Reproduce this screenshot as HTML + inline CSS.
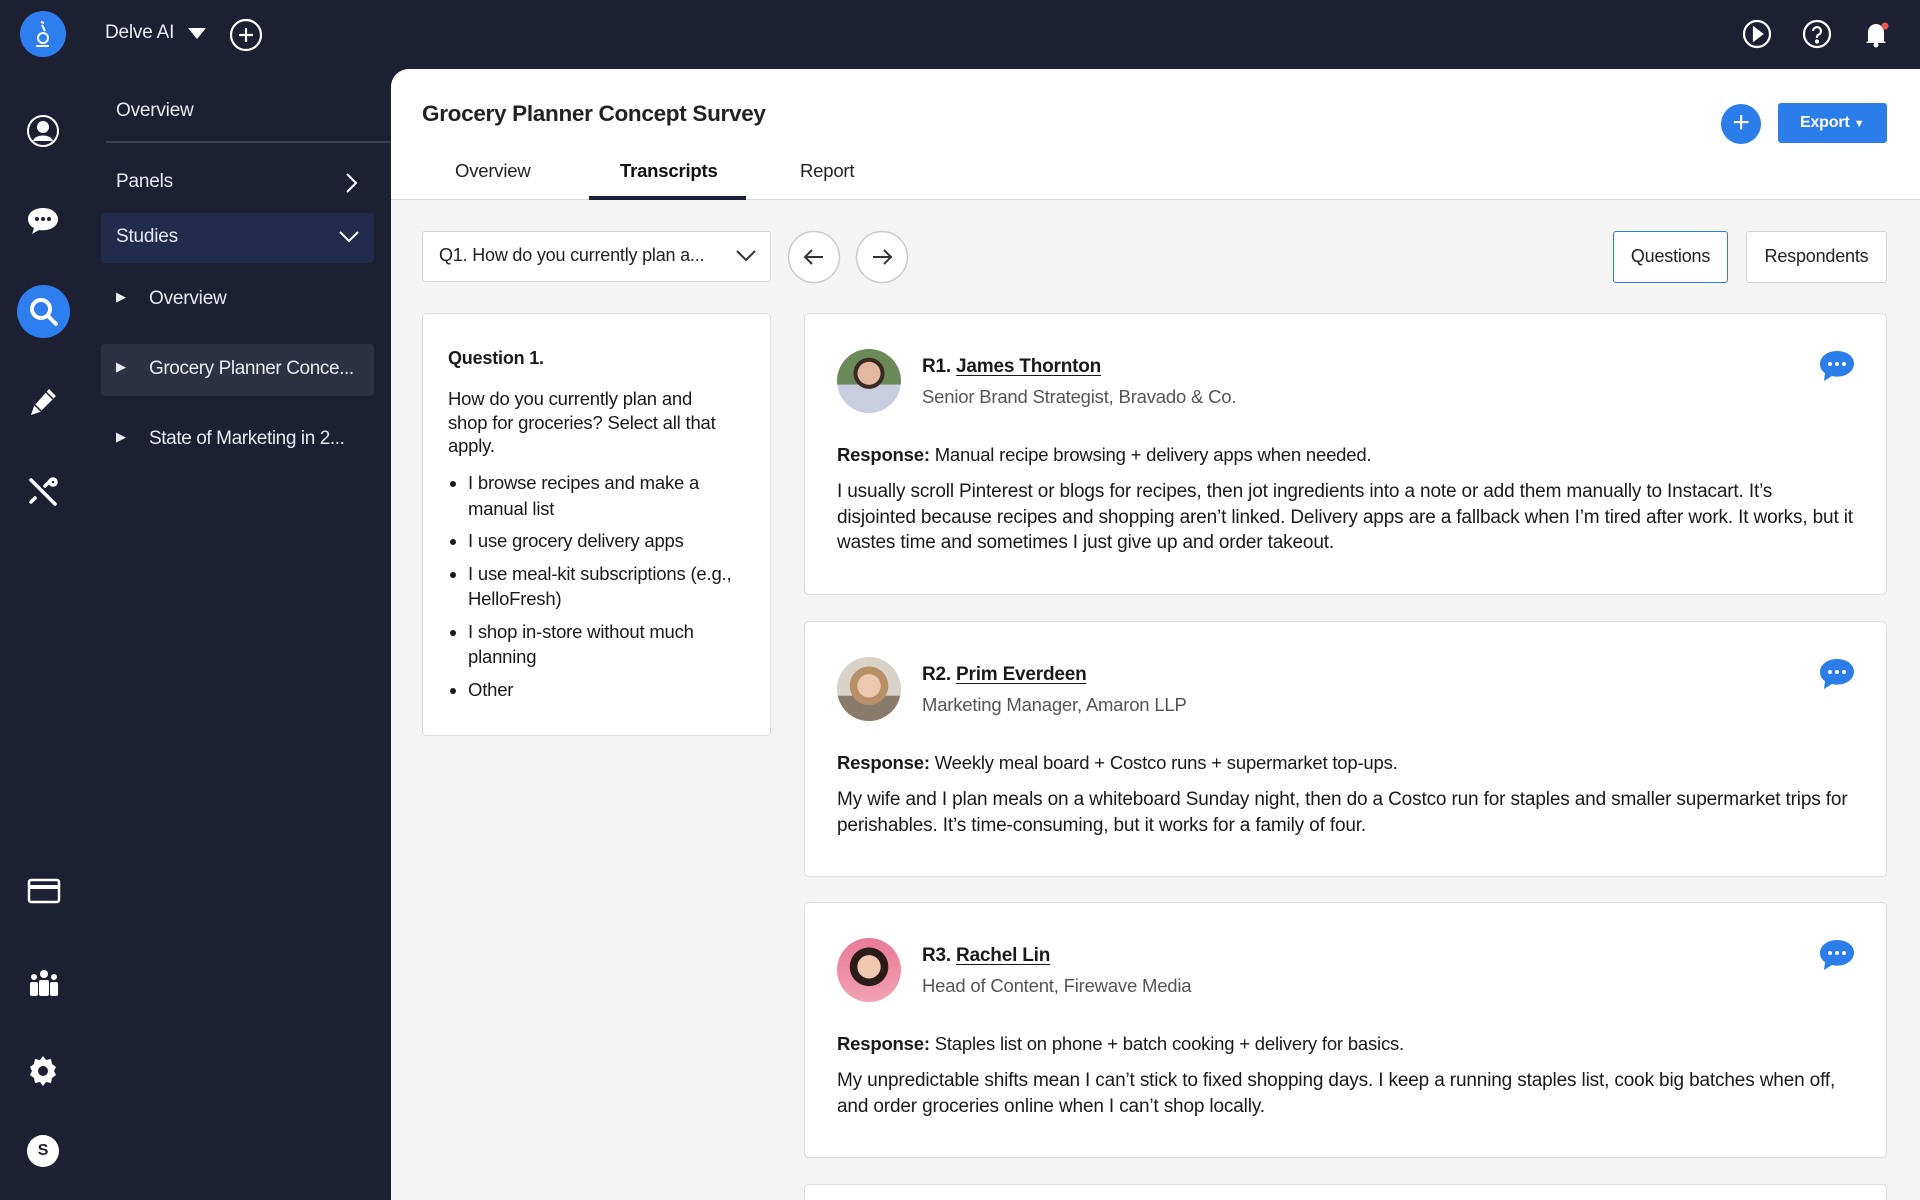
<!DOCTYPE html>
<html><head><meta charset="utf-8"><style>
*{box-sizing:border-box;margin:0;padding:0}
body{width:1920px;height:1200px;overflow:hidden;background:#1d2033;font-family:"Liberation Sans",sans-serif;position:relative;color:#1a1a1a;letter-spacing:-0.2px}
.abs{position:absolute}
.side{color:#e8eaf0;font-size:19px}
.main{left:391px;top:69px;width:1529px;height:1131px;background:#f4f4f4;border-top-left-radius:18px;overflow:hidden}
.head{position:absolute;left:0;top:0;width:100%;height:131px;background:#fff;border-bottom:1px solid #d8d8d8}
.card{position:absolute;background:#fff;border:1.5px solid #dcdcdc;border-radius:5px}
.rc{left:413px;width:1083px}
.name{font-size:19px;font-weight:bold}
.name u{text-underline-offset:3px}
.sub{font-size:18.5px;color:#555}
.txt{font-size:18.5px;line-height:25.5px;letter-spacing:-0.2px}
.body{font-size:19px;letter-spacing:-0.15px}
.nw{white-space:nowrap}
.av{position:absolute;left:32px;top:35px;width:64px;height:64px;border-radius:50%}
.bub{position:absolute;right:30px;top:35px}
</style></head><body>
<div class="abs" style="left:20px;top:11px;width:46px;height:46px;border-radius:50%;background:#2f7ef0"></div>
<svg class="abs" style="left:31px;top:19px" width="24" height="30" viewBox="0 0 24 30" fill="none" stroke="#fff" stroke-width="2"><path d="M10 3l3 1M11 6l3 6"/><circle cx="12" cy="19" r="5"/><path d="M5 27h13"/></svg>
<div class="abs side" style="left:105px;top:22px">Delve AI</div>
<svg class="abs" style="left:188px;top:28px" width="18" height="12"><path d="M0 0h18L9 11z" fill="#fff"/></svg>
<svg class="abs" style="left:229px;top:18px" width="34" height="34" fill="none" stroke="#fff" stroke-width="2.2"><circle cx="17" cy="17" r="15"/><path d="M17 10v14M10 17h14"/></svg>
<svg class="abs" style="left:1742px;top:19px" width="30" height="30" fill="none" stroke="#fff" stroke-width="2.2"><circle cx="15" cy="15" r="13"/><path d="M12 9l8 6-8 6z" fill="#fff"/></svg>
<svg class="abs" style="left:1802px;top:19px" width="30" height="30" fill="none" stroke="#fff" stroke-width="2.2"><circle cx="15" cy="15" r="13"/><path d="M11 12a4 4 0 1 1 5 4c-1 .5-1 1.5-1 3"/><circle cx="15" cy="22.5" r="1" fill="#fff"/></svg>
<svg class="abs" style="left:1860px;top:17px" width="32" height="32"><path d="M8 24V15a8 8 0 0 1 16 0v9l2 2H6z" fill="#fff"/><circle cx="16" cy="28" r="2.5" fill="#fff"/><circle cx="25" cy="9" r="3.5" fill="#ef5350"/></svg>
<svg class="abs" style="left:26px;top:114px" width="34" height="34" fill="none" stroke="#fff" stroke-width="2"><circle cx="17" cy="17" r="15"/><circle cx="17" cy="13" r="5" fill="#fff"/><path d="M8 27c2-6 16-6 18 0" fill="#fff"/></svg>
<svg class="abs" style="left:26px;top:205px" width="34" height="32"><path d="M17 3C8 3 2 8 2 14c0 4 2 7 6 9l-2 6 7-4c1 .2 3 .3 4 .3 9 0 15-5 15-11S26 3 17 3z" fill="#fff"/><circle cx="11" cy="14" r="2" fill="#1d2033"/><circle cx="17" cy="14" r="2" fill="#1d2033"/><circle cx="23" cy="14" r="2" fill="#1d2033"/></svg>
<div class="abs" style="left:17px;top:285px;width:53px;height:53px;border-radius:50%;background:#2f7ef0"></div>
<svg class="abs" style="left:28px;top:296px" width="32" height="32" fill="none" stroke="#fff" stroke-width="4"><circle cx="13" cy="13" r="9"/><path d="M20 20l8 8" stroke-linecap="round"/></svg>
<svg class="abs" style="left:27px;top:386px" width="32" height="32"><path d="M22 3l7 7-16 16-9 3 3-9z" fill="#fff"/><path d="M8 19l6 6M19 6l7 7" stroke="#1d2033" stroke-width="1.5"/></svg>
<svg class="abs" style="left:27px;top:476px" width="32" height="32" stroke="#fff" stroke-width="3.5" fill="none" stroke-linecap="round"><path d="M4 4l24 24M24 4l-6 6M8 22l-4 4"/><circle cx="26" cy="6" r="3"/></svg>
<svg class="abs" style="left:27px;top:877px" width="34" height="28" fill="none" stroke="#fff" stroke-width="2.5"><rect x="2" y="3" width="30" height="22" rx="2"/><path d="M2 10h30" stroke-width="4"/></svg>
<svg class="abs" style="left:27px;top:968px" width="34" height="30" fill="#fff"><circle cx="17" cy="6" r="4"/><circle cx="7" cy="9" r="3"/><circle cx="27" cy="9" r="3"/><rect x="12" y="12" width="10" height="16" rx="2"/><rect x="3" y="14" width="8" height="14" rx="2"/><rect x="23" y="14" width="8" height="14" rx="2"/></svg>
<svg class="abs" style="left:26px;top:1054px" width="34" height="34"><path d="M17 2l3 4 5-1 1 5 4 3-2 4 2 4-4 3-1 5-5-1-3 4-3-4-5 1-1-5-4-3 2-4-2-4 4-3 1-5 5 1z" fill="#fff"/><circle cx="17" cy="17" r="5" fill="#1d2033"/></svg>
<div class="abs" style="left:27px;top:1135px;width:32px;height:32px;border-radius:50%;background:#fff;color:#1d2033;font-weight:bold;font-size:16px;text-align:center;line-height:32px">S</div>
<div class="abs side" style="left:116px;top:100px">Overview</div>
<div class="abs" style="left:106px;top:141px;width:285px;height:1.5px;background:#3a3e52"></div>
<div class="abs side" style="left:116px;top:171px">Panels</div>
<svg class="abs" style="left:344px;top:172px" width="14" height="22" fill="none" stroke="#fff" stroke-width="2"><path d="M3 2l9 9-9 9"/></svg>
<div class="abs" style="left:101px;top:213px;width:273px;height:50px;border-radius:4px;background:#212b4c"></div>
<div class="abs side" style="left:116px;top:226px">Studies</div>
<svg class="abs" style="left:338px;top:230px" width="22" height="14" fill="none" stroke="#fff" stroke-width="2"><path d="M2 2l9 9 9-9"/></svg>
<div class="abs side" style="left:116px;top:289px;font-size:13px">▶</div>
<div class="abs side" style="left:149px;top:288px">Overview</div>
<div class="abs" style="left:101px;top:344px;width:273px;height:52px;border-radius:4px;background:#2e3143"></div>
<div class="abs side" style="left:116px;top:359px;font-size:13px">▶</div>
<div class="abs side" style="left:149px;top:358px;letter-spacing:-0.4px">Grocery Planner Conce...</div>
<div class="abs side" style="left:116px;top:429px;font-size:13px">▶</div>
<div class="abs side" style="left:149px;top:428px;letter-spacing:-0.4px">State of Marketing in 2...</div>
<div class="abs main">
 <div class="head">
  <div class="abs" style="left:31px;top:32px;font-size:22.5px;font-weight:bold;color:#222;letter-spacing:-0.3px">Grocery Planner Concept Survey</div>
  <div class="abs" style="left:1330px;top:35px;width:40px;height:40px;border-radius:50%;background:#2b7de9;color:#fff;font-size:30px;text-align:center;line-height:38px">+</div>
  <div class="abs" style="left:1387px;top:34px;width:109px;height:40px;border-radius:3px;background:#2b7de9;color:#fff;font-size:16px;font-weight:bold;line-height:40px;padding-left:22px">Export <span style="font-size:11px">▼</span></div>
  <div class="abs" style="left:64px;top:91px;font-size:18.5px;color:#222">Overview</div>
  <div class="abs" style="left:229px;top:91px;font-size:18.5px;font-weight:bold;color:#111">Transcripts</div>
  <div class="abs" style="left:198px;top:127px;width:157px;height:4px;background:#1e2235"></div>
  <div class="abs" style="left:409px;top:91px;font-size:18.5px;color:#222">Report</div>
 </div>
 <div class="abs" style="left:31px;top:162px;width:349px;height:51px;background:#fff;border:1.5px solid #d6d6d6;border-radius:3px;font-size:18px;padding:13px 16px;color:#222;letter-spacing:-0.2px">Q1. How do you currently plan a...</div>
 <svg class="abs" style="left:344px;top:180px" width="22" height="14" fill="none" stroke="#333" stroke-width="2"><path d="M2 2l9 9 9-9"/></svg>
 <svg class="abs" style="left:396px;top:161px" width="54" height="54" fill="#fff" stroke="#ccc" stroke-width="1.5"><circle cx="27" cy="27" r="25.5"/><path d="M36 27H18M25 20l-7 7 7 7" stroke="#333" stroke-width="2" fill="none"/></svg>
 <svg class="abs" style="left:464px;top:161px" width="54" height="54" fill="#fff" stroke="#ccc" stroke-width="1.5"><circle cx="27" cy="27" r="25.5"/><path d="M18 27h18M29 20l7 7-7 7" stroke="#333" stroke-width="2" fill="none"/></svg>
 <div class="abs" style="left:1222px;top:162px;width:115px;height:52px;background:#fff;border:1.5px solid #2b7de9;border-radius:3px;font-size:18px;text-align:center;line-height:49px;color:#222">Questions</div>
 <div class="abs" style="left:1355px;top:162px;width:141px;height:52px;background:#fff;border:1.5px solid #d6d6d6;border-radius:3px;font-size:18px;text-align:center;line-height:49px;color:#222">Respondents</div>
 <div class="card" style="left:31px;top:244px;width:349px;height:423px">
  <div class="abs" style="left:25px;top:34px;font-size:18px;font-weight:bold">Question 1.</div>
  <div class="abs txt nw" style="left:25px;top:73px;line-height:23.5px">How do you currently plan and<br>shop for groceries? Select all that<br>apply.</div>
  <ul class="abs txt" style="left:45px;top:156px;width:270px;list-style:disc;padding-left:0">
   <li style="margin-bottom:7px">I browse recipes and make a manual list</li>
   <li style="margin-bottom:7px">I use grocery delivery apps</li>
   <li style="margin-bottom:7px">I use meal-kit subscriptions (e.g., HelloFresh)</li>
   <li style="margin-bottom:7px">I shop in-store without much planning</li>
   <li>Other</li>
  </ul>
 </div>
 <div class="card rc" style="top:244px;height:282px">
  <div class="av" style="background:radial-gradient(circle at 50% 38%,#e2b9a0 0 22%,#3a2a22 23% 30%,transparent 31%),linear-gradient(#6a8a5a 0 55%,#c9cde0 56%)"></div>
  <div class="abs name" style="left:117px;top:42px">R1. <u>James Thornton</u></div>
  <div class="abs sub" style="left:117px;top:72px">Senior Brand Strategist, Bravado &amp; Co.</div>
  <svg class="bub" width="38" height="34"><path d="M19 2C9 2 2 8 2 15c0 4 2 7 5 9l-1 8 8-5c2 .5 3 .6 5 .6 10 0 17-6 17-13S29 2 19 2z" fill="#2b7de9"/><circle cx="12" cy="15" r="2" fill="#fff"/><circle cx="19" cy="15" r="2" fill="#fff"/><circle cx="26" cy="15" r="2" fill="#fff"/></svg>
  <div class="abs txt" style="left:32px;top:128px"><b>Response:</b> Manual recipe browsing + delivery apps when needed.</div>
  <div class="abs txt body nw" style="left:32px;top:165px">I usually scroll Pinterest or blogs for recipes, then jot ingredients into a note or add them manually to Instacart. It’s<br>disjointed because recipes and shopping aren’t linked. Delivery apps are a fallback when I’m tired after work. It works, but it<br>wastes time and sometimes I just give up and order takeout.</div>
 </div>
 <div class="card rc" style="top:552px;height:256px">
  <div class="av" style="background:radial-gradient(circle at 50% 45%,#ecc8b0 0 24%,#b89068 25% 40%,transparent 41%),linear-gradient(#d8d2c8 0 60%,#8a7a6a 61%)"></div>
  <div class="abs name" style="left:117px;top:42px">R2. <u>Prim Everdeen</u></div>
  <div class="abs sub" style="left:117px;top:72px">Marketing Manager, Amaron LLP</div>
  <svg class="bub" width="38" height="34"><path d="M19 2C9 2 2 8 2 15c0 4 2 7 5 9l-1 8 8-5c2 .5 3 .6 5 .6 10 0 17-6 17-13S29 2 19 2z" fill="#2b7de9"/><circle cx="12" cy="15" r="2" fill="#fff"/><circle cx="19" cy="15" r="2" fill="#fff"/><circle cx="26" cy="15" r="2" fill="#fff"/></svg>
  <div class="abs txt" style="left:32px;top:128px"><b>Response:</b> Weekly meal board + Costco runs + supermarket top-ups.</div>
  <div class="abs txt body nw" style="left:32px;top:165px">My wife and I plan meals on a whiteboard Sunday night, then do a Costco run for staples and smaller supermarket trips for<br>perishables. It’s time-consuming, but it works for a family of four.</div>
 </div>
 <div class="card rc" style="top:833px;height:256px">
  <div class="av" style="background:radial-gradient(circle at 50% 45%,#f0c8b0 0 24%,#2a1a18 25% 40%,transparent 41%),linear-gradient(#e87a98,#f2a0b4)"></div>
  <div class="abs name" style="left:117px;top:42px">R3. <u>Rachel Lin</u></div>
  <div class="abs sub" style="left:117px;top:72px">Head of Content, Firewave Media</div>
  <svg class="bub" width="38" height="34"><path d="M19 2C9 2 2 8 2 15c0 4 2 7 5 9l-1 8 8-5c2 .5 3 .6 5 .6 10 0 17-6 17-13S29 2 19 2z" fill="#2b7de9"/><circle cx="12" cy="15" r="2" fill="#fff"/><circle cx="19" cy="15" r="2" fill="#fff"/><circle cx="26" cy="15" r="2" fill="#fff"/></svg>
  <div class="abs txt" style="left:32px;top:128px"><b>Response:</b> Staples list on phone + batch cooking + delivery for basics.</div>
  <div class="abs txt body nw" style="left:32px;top:165px">My unpredictable shifts mean I can’t stick to fixed shopping days. I keep a running staples list, cook big batches when off,<br>and order groceries online when I can’t shop locally.</div>
 </div>
 <div class="card rc" style="top:1115px;height:30px"></div>
</div>
</body></html>
